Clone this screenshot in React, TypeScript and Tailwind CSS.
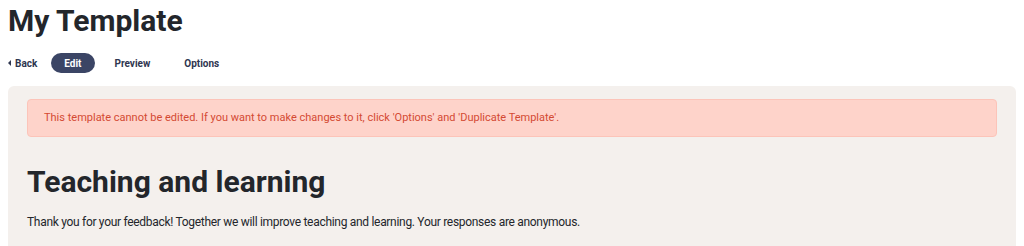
import React from 'react'

const tabs = ['Edit', 'Preview', 'Options']

export default function App() {
  return (
    <div className="h-[246px] overflow-hidden bg-white text-[#23262b] font-['Roboto',sans-serif]">
      <div className="px-2">
        <h1 className="pt-[2px] text-[30px] leading-[38px] font-bold">My Template</h1>

        <nav className="mt-[13px] flex items-center h-[20px] text-[10px] font-bold text-[#2f3650]">
          <a className="flex items-center gap-[4px] pr-[14px]">
            <span className="w-0 h-0 border-y-[3px] border-y-transparent border-r-[3px] border-r-[#2f3650]" />
            Back
          </a>
          {tabs.map((t, i) => (
            <a
              key={t}
              className={
                i === 0
                  ? 'h-[20px] px-[13px] mr-[3px] flex items-center rounded-full bg-[#3b4565] text-white'
                  : 'px-[17px] flex items-center'
              }
            >
              {t}
            </a>
          ))}
        </nav>

        <section className="mt-[13px] rounded-t-[6px] bg-[#f4f0ed] px-[19px] pt-[13px] pb-6">
          <div className="rounded-[4px] border border-[#fcc4b9] bg-[#fed3ca] px-4 py-[11px] text-[11px] leading-[14px] text-[#d44a33]">
            This template cannot be edited. If you want to make changes to it, click 'Options' and 'Duplicate Template'.
          </div>

          <h2 className="mt-[25px] text-[30px] leading-[40px] font-bold">Teaching and learning</h2>
          <p className="mt-[12px] text-[12px] leading-[16px] tracking-[-0.3px]">
            Thank you for your feedback! Together we will improve teaching and learning. Your responses are anonymous.
          </p>
        </section>
      </div>
    </div>
  )
}
